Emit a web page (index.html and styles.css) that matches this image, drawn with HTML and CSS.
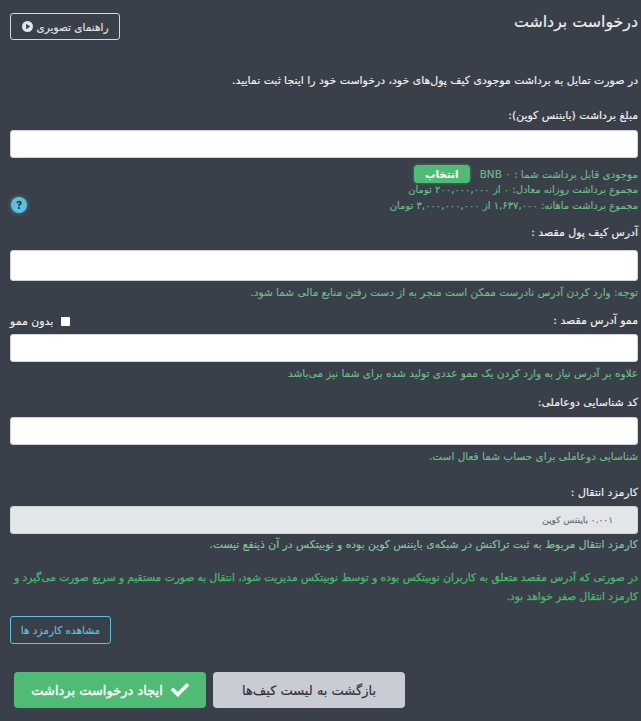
FILE: index.html
```html
<!DOCTYPE html>
<html lang="fa" dir="rtl">
<head>
<meta charset="UTF-8" />
<meta name="viewport" content="width=device-width, initial-scale=1" />
<title>درخواست برداشت</title>
<link rel="stylesheet" href="styles.css">
</head>
<body>
  <div class="container">
    <div class="head">
      <h1>درخواست برداشت</h1>
      <button class="btn-guide">راهنمای تصویری
        <svg class="play" viewBox="0 0 16 16" width="11" height="11"><circle cx="8" cy="8" r="8" fill="#e0e3e8"/><path d="M6 4l6 4-6 4z" fill="#3a4049"/></svg>
      </button>
    </div>

    <p class="intro">در صورت تمایل به برداشت موجودی کیف پول‌های خود، درخواست خود را اینجا ثبت نمایید.</p>

    <label class="label label-amount">مبلغ برداشت (بایننس کوین):</label>
    <input type="text" class="field" />

    <div class="balance">
      <div class="balance-text">
        <div class="balance-line">موجودی قابل برداشت شما : ۰ BNB <button class="btn-pick">انتخاب</button></div>
        <div>مجموع برداشت روزانه معادل: ۰ از ۲۰۰,۰۰۰,۰۰۰ تومان</div>
        <div>مجموع برداشت ماهانه: ۱,۶۳۷,۰۰۰ از ۳,۰۰۰,۰۰۰,۰۰۰ تومان</div>
      </div>
      <svg class="help" viewBox="0 0 16 16" width="16" height="16"><circle cx="8" cy="8" r="8" fill="#5bc0de"/><path d="M5.400 6.200C5.500 4.600 6.600 3.700 8.100 3.700c1.500 0 2.600 .9 2.600 2.200 0 1.100-.7 1.600-1.300 2-.5.4-.7.600-.7 1.200H7.100c0-1.100.4-1.600 1-2 .5-.4.8-.6.800-1.100 0-.5-.3-.8-.8-.8-.6 0-.9.400-1 1z" fill="#2c3138"/><rect x="7.100" y="10" width="1.700" height="1.900" fill="#2c3138"/></svg>
    </div>

    <label class="label label-address">آدرس کیف پول مقصد :</label>
    <input type="text" class="field field-tall" />
    <p class="hint">توجه: وارد کردن آدرس نادرست ممکن است منجر به از دست رفتن منابع مالی شما شود.</p>

    <div class="memo-row">
      <label class="label">ممو آدرس مقصد :</label>
      <label class="no-memo"><span class="check"></span> بدون ممو</label>
    </div>
    <input type="text" class="field field-memo" />
    <p class="hint">علاوه بر آدرس نیاز به وارد کردن یک ممو عددی تولید شده برای شما نیز می‌باشد</p>

    <label class="label label-tfa">کد شناسایی دوعاملی:</label>
    <input type="text" class="field" />
    <p class="hint">شناسایی دوعاملی برای حساب شما فعال است.</p>

    <label class="label label-fee">کارمزد انتقال :</label>
    <div class="field field-off">۰.۰۰۱ بایننس کوین</div>
    <p class="hint hint-fee">کارمزد انتقال مربوط به ثبت تراکنش در شبکه‌ی بایننس کوین بوده و نوبیتکس در آن ذینفع نیست.</p>

    <p class="notice">در صورتی که آدرس مقصد متعلق به کاربران نوبیتکس بوده و توسط نوبیتکس مدیریت شود، انتقال به صورت مستقیم و سریع صورت می‌گیرد و کارمزد انتقال صفر خواهد بود.</p>

    <div class="fee-row">
      <button class="btn-fees">مشاهده کارمزد ها</button>
    </div>

    <div class="actions">
      <button class="btn-back">بازگشت به لیست کیف‌ها</button>
      <button class="btn-submit">
        <svg viewBox="0 0 512 512" width="18" height="18"><path d="M174 439L7 273c-10-10-10-26 0-36l36-36c10-10 26-10 36 0l113 112L433 72c10-10 26-10 36 0l36 36c10 10 10 26 0 36L210 439c-10 10-26 10-36 0z" fill="#fff"/></svg>
        ایجاد درخواست برداشت
      </button>
    </div>
  </div>
</body>
</html>
```

FILE: styles.css
```css
html, body {
  margin: 0;
  padding: 0;
}
body {
  background-color: #3a4049;
  color: #f2f3f5;
  font-family: 'DejaVu Sans', sans-serif;
  font-size: 10.5px;
  -webkit-text-stroke: 0.15px;
  overflow: hidden;
}
.container {
  padding: 0 3px;
  margin-left: 7px;
  height: 721px;
}
.head {
  display: flex;
  justify-content: space-between;
  align-items: flex-start;
  padding-top: 11px;
}
h1 {
  margin: 0;
  font-size: 15.8px;
  font-weight: 400;
  line-height: 22px;
  color: #eef0f2;
}
.btn-guide {
  display: flex;
  align-items: center;
  justify-content: center;
  gap: 4px;
  width: 110px;
  height: 27px;
  margin-top: 2px;
  background: transparent;
  border: 1px solid #d5d8dc;
  border-radius: 3px;
  color: #e0e3e8;
  font: inherit;
}
.intro {
  margin: 33px 0 0;
  font-size: 10.9px;
  line-height: 16px;
}
.label {
  display: block;
  font-size: 10.9px;
  line-height: 16px;
  color: #f2f3f5;
}
.label-amount {
  margin-top: 19px;
}
.label-address {
  margin-top: 11px;
}
.label-tfa {
  margin-top: 14px;
}
.label-fee {
  margin-top: 21px;
}
.field {
  display: block;
  box-sizing: border-box;
  width: 100%;
  height: 28px;
  margin-top: 6px;
  padding: 0 24px;
  background: #fff;
  border: 1px solid #ced4da;
  border-radius: 3px;
  outline: none;
}
.field-tall {
  height: 31px;
  margin-top: 9px;
}
.field-memo {
  margin-top: 5px;
}
.field-off {
  margin-top: 5px;
  background: #e3e6e8;
  color: #666c73;
  font-size: 9px;
  line-height: 27px;
}
.balance {
  display: flex;
  justify-content: space-between;
  align-items: flex-end;
  margin-top: 8px;
  color: #6dbd8c;
  font-size: 10px;
  line-height: 16px;
}
.balance-line {
  display: flex;
  align-items: center;
  gap: 10px;
  height: 16px;
  font-size: 10.4px;
}
.btn-pick {
  width: 56px;
  height: 18px;
  padding: 0;
  background: #4fbb74;
  border: none;
  border-radius: 4px;
  color: #fff;
  font: inherit;
  font-weight: bold;
  box-shadow: 0 0 3px #4fbb74aa;
}
.help {
  margin-left: 1px;
  margin-bottom: 1px;
  filter: drop-shadow(0 0 2px #5bc0de88);
}
.hint {
  margin: 3px 0 0;
  line-height: 16px;
  color: #6dbd8c;
}
.hint-fee {
  font-size: 10.75px;
  color: #84c6a0;
}
.memo-row {
  display: flex;
  justify-content: space-between;
  align-items: center;
  margin-top: 13px;
}
.no-memo {
  display: flex;
  align-items: center;
  gap: 8px;
  font-size: 10.9px;
}
.check {
  width: 9px;
  height: 9px;
  background: #fff;
  border-radius: 1px;
}
.notice {
  margin: 15px 0 0;
  font-size: 10.6px;
  line-height: 19px;
  color: #45b86c;
  -webkit-text-stroke: 0.3px;
}
.fee-row {
  margin-top: 10px;
  display: flex;
  justify-content: flex-end;
}
.btn-fees {
  width: 101px;
  height: 28px;
  padding: 0;
  background: transparent;
  border: 1px solid #5bc0de;
  border-radius: 3px;
  color: #5bc0de;
  font: inherit;
}
.actions {
  display: flex;
  justify-content: flex-end;
  gap: 7px;
  margin-top: 28px;
  padding-left: 4px;
}
.btn-back, .btn-submit {
  width: 192px;
  height: 36px;
  border: none;
  border-radius: 4px;
  font-family: inherit;
  font-size: 13px;
}
.btn-back {
  background: #c9ccd5;
  color: #2c3138;
}
.btn-submit {
  display: flex;
  align-items: center;
  justify-content: center;
  gap: 8px;
  background: #4fbb74;
  color: #fff;
  -webkit-text-stroke: 0.4px;
}
```
